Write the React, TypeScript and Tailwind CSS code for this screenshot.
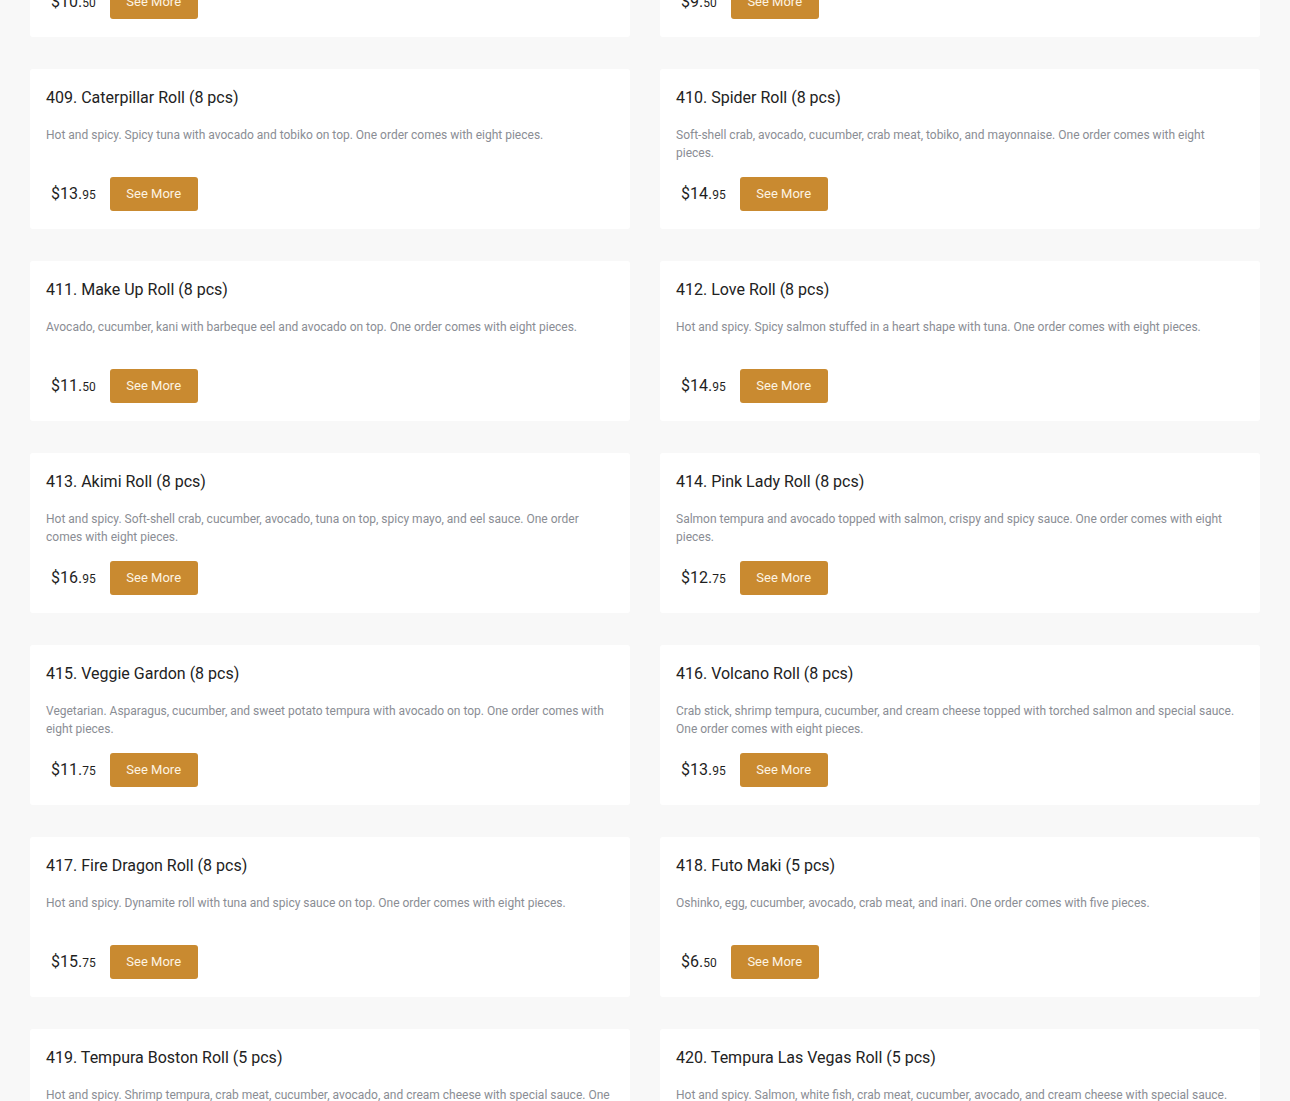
const items = [
  {
    title: "407. Rainbow Roll (8 pcs)",
    desc: "Crab meat and cucumber topped with tuna, salmon, white fish, and avocado. One order comes with eight pieces.",
    dollars: "10",
    cents: "50",
  },
  {
    title: "408. Dragon Roll (8 pcs)",
    desc: "Eel and cucumber topped with avocado and eel sauce. One order comes with eight pieces.",
    dollars: "9",
    cents: "50",
  },
  {
    title: "409. Caterpillar Roll (8 pcs)",
    desc: "Hot and spicy. Spicy tuna with avocado and tobiko on top. One order comes with eight pieces.",
    dollars: "13",
    cents: "95",
  },
  {
    title: "410. Spider Roll (8 pcs)",
    desc: "Soft-shell crab, avocado, cucumber, crab meat, tobiko, and mayonnaise. One order comes with eight pieces.",
    dollars: "14",
    cents: "95",
  },
  {
    title: "411. Make Up Roll (8 pcs)",
    desc: "Avocado, cucumber, kani with barbeque eel and avocado on top. One order comes with eight pieces.",
    dollars: "11",
    cents: "50",
  },
  {
    title: "412. Love Roll (8 pcs)",
    desc: "Hot and spicy. Spicy salmon stuffed in a heart shape with tuna. One order comes with eight pieces.",
    dollars: "14",
    cents: "95",
  },
  {
    title: "413. Akimi Roll (8 pcs)",
    desc: "Hot and spicy. Soft-shell crab, cucumber, avocado, tuna on top, spicy mayo, and eel sauce. One order comes with eight pieces.",
    dollars: "16",
    cents: "95",
  },
  {
    title: "414. Pink Lady Roll (8 pcs)",
    desc: "Salmon tempura and avocado topped with salmon, crispy and spicy sauce. One order comes with eight pieces.",
    dollars: "12",
    cents: "75",
  },
  {
    title: "415. Veggie Gardon (8 pcs)",
    desc: "Vegetarian. Asparagus, cucumber, and sweet potato tempura with avocado on top. One order comes with eight pieces.",
    dollars: "11",
    cents: "75",
  },
  {
    title: "416. Volcano Roll (8 pcs)",
    desc: "Crab stick, shrimp tempura, cucumber, and cream cheese topped with torched salmon and special sauce. One order comes with eight pieces.",
    dollars: "13",
    cents: "95",
  },
  {
    title: "417. Fire Dragon Roll (8 pcs)",
    desc: "Hot and spicy. Dynamite roll with tuna and spicy sauce on top. One order comes with eight pieces.",
    dollars: "15",
    cents: "75",
  },
  {
    title: "418. Futo Maki (5 pcs)",
    desc: "Oshinko, egg, cucumber, avocado, crab meat, and inari. One order comes with five pieces.",
    dollars: "6",
    cents: "50",
  },
  {
    title: "419. Tempura Boston Roll (5 pcs)",
    desc: "Hot and spicy. Shrimp tempura, crab meat, cucumber, avocado, and cream cheese with special sauce. One order comes with five pieces.",
    dollars: "12",
    cents: "95",
  },
  {
    title: "420. Tempura Las Vegas Roll (5 pcs)",
    desc: "Hot and spicy. Salmon, white fish, crab meat, cucumber, avocado, and cream cheese with special sauce. One order comes with five pieces.",
    dollars: "12",
    cents: "95",
  },
];

type Item = (typeof items)[number];

function MenuCard({ item }: { item: Item }) {
  return (
    <div className="flex flex-col rounded-[3px] bg-white px-4 pb-[18px] pt-[17px]">
      <h3 className="text-base font-normal leading-6 text-[#222222]">{item.title}</h3>
      <p className="mt-4 min-h-[36px] text-xs leading-[18px] text-[#8a8d94]">{item.desc}</p>
      <div className="mt-[15px] flex h-[34px] items-center">
        <span className="ml-[5px] mt-px text-base leading-none text-[#1f1f1f]">
          ${item.dollars}.<span className="text-xs">{item.cents}</span>
        </span>
        <button className="ml-[14px] h-[34px] w-[88px] rounded-[3px] bg-[#c98a30] text-[13px] text-[#fdf4e3]">
          See More
        </button>
      </div>
    </div>
  );
}

export default function App() {
  return (
    <div
      className="flex h-[1101px] flex-col overflow-hidden bg-[#f8f8f8]"
      style={{ fontFamily: "Roboto, 'Liberation Sans', sans-serif" }}
    >
      <div className="-mt-[123px] grid grid-cols-2 gap-x-[30px] gap-y-[32px] px-[30px]">
        {items.map((item) => (
          <MenuCard key={item.title} item={item} />
        ))}
      </div>
    </div>
  );
}
